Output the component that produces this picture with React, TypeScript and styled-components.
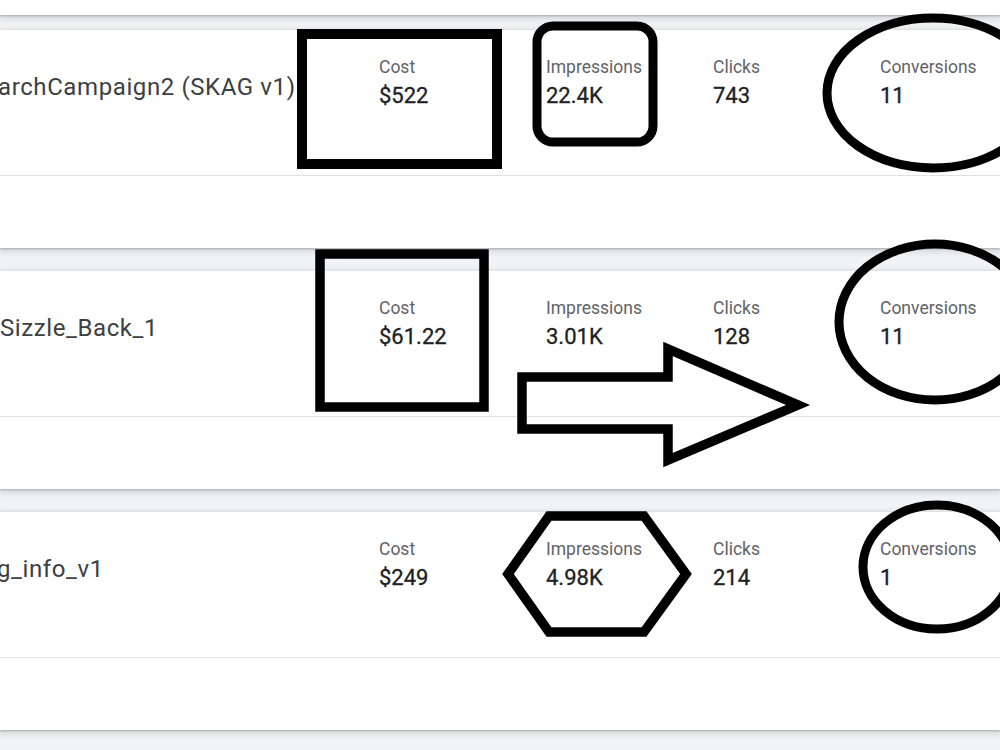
import React, { FC } from "react";
import styled, { createGlobalStyle } from "styled-components";

const GlobalStyle = createGlobalStyle`
  html, body {
    margin: 0;
    padding: 0;
    background: #f1f3f4;
  }
  body {
    font-family: Roboto, "Noto Sans", Arial, sans-serif;
  }
`;

const Page = styled.div`
  position: relative;
  width: 1000px;
  height: 750px;
  overflow: hidden;
  background: #f1f3f4;
  display: flex;
  flex-direction: column;
`;

const cardShadow = `
  box-shadow: 0 1px 2px 0 rgba(60, 64, 67, 0.3),
    0 2px 6px 2px rgba(60, 64, 67, 0.15);
`;

// tail of the card scrolled above the first visible one
const CardTail = styled.div`
  flex: 0 0 15px;
  margin-bottom: 15px;
  background: #fff;
  ${cardShadow}
`;

const Card = styled.div`
  flex: 0 0 auto;
  margin-bottom: 23px;
  background: #fff;
  ${cardShadow}
`;

const SummaryRow = styled.div`
  display: grid;
  grid-template-columns: 379px repeat(4, 167px);
  height: 145px;
  border-bottom: 1px solid #e0e0e0;
`;

const ActionsRow = styled.div`
  height: 72px;
`;

const CampaignName = styled.div<{ $shift: number }>`
  padding-top: 41px;
  margin-left: ${(p) => p.$shift}px;
  font-size: 24px;
  line-height: 32px;
  letter-spacing: 0.6px;
  color: #3c4043;
  white-space: nowrap;
`;

const Metric = styled.div`
  padding-top: 27px;
  display: flex;
  flex-direction: column;
`;

const MetricLabel = styled.span`
  font-size: 17.5px;
  line-height: 20px;
  color: #5f6368;
`;

const MetricValue = styled.span`
  font-size: 22px;
  line-height: 37px;
  color: #202124;
  -webkit-text-stroke: 0.3px #202124;
`;

// hand-drawn markup layered over the cards
const Markup = styled.svg`
  position: absolute;
  top: 0;
  left: 0;
  pointer-events: none;
`;

interface CampaignRow {
  name: string;
  shift: number;
  cost: string;
  impressions: string;
  clicks: string;
  conversions: string;
}

const CAMPAIGNS: CampaignRow[] = [
  {
    name: "archCampaign2 (SKAG v1)",
    shift: -2,
    cost: "$522",
    impressions: "22.4K",
    clicks: "743",
    conversions: "11",
  },
  {
    name: "Sizzle_Back_1",
    shift: 0,
    cost: "$61.22",
    impressions: "3.01K",
    clicks: "128",
    conversions: "11",
  },
  {
    name: "g_info_v1",
    shift: -3,
    cost: "$249",
    impressions: "4.98K",
    clicks: "214",
    conversions: "1",
  },
];

const MetricCell: FC<{ label: string; value: string }> = ({ label, value }) => (
  <Metric>
    <MetricLabel>{label}</MetricLabel>
    <MetricValue>{value}</MetricValue>
  </Metric>
);

const Annotations: FC = () => (
  <Markup width={1000} height={750} viewBox="0 0 1000 750">
    <g fill="none" stroke="#000" strokeLinejoin="miter">
      <rect x={302} y={34} width={195} height={130} strokeWidth={10} />
      <rect x={537} y={26} width={116} height={116} rx={16} strokeWidth={9} />
      <ellipse cx={933} cy={93} rx={106} ry={75} strokeWidth={9} />

      <rect x={320} y={254} width={164} height={153} strokeWidth={9.5} />
      <ellipse cx={935} cy={322} rx={96} ry={78} strokeWidth={9} />
      <polygon
        points="522,377 668,377 668,349 798,405 668,460 668,429 522,429"
        strokeWidth={9.5}
      />

      <polygon
        points="508,574 549,516 644,516 686,574 644,632 549,632"
        strokeWidth={9.5}
      />
      <ellipse cx={937} cy={567} rx={74} ry={62} strokeWidth={9} />
    </g>
  </Markup>
);

export default function App() {
  return (
    <>
      <GlobalStyle />
      <Page>
        <CardTail />
        {CAMPAIGNS.map((c) => (
          <Card key={c.name}>
            <SummaryRow>
              <CampaignName $shift={c.shift}>{c.name}</CampaignName>
              <MetricCell label="Cost" value={c.cost} />
              <MetricCell label="Impressions" value={c.impressions} />
              <MetricCell label="Clicks" value={c.clicks} />
              <MetricCell label="Conversions" value={c.conversions} />
            </SummaryRow>
            <ActionsRow />
          </Card>
        ))}
        <Annotations />
      </Page>
    </>
  );
}
